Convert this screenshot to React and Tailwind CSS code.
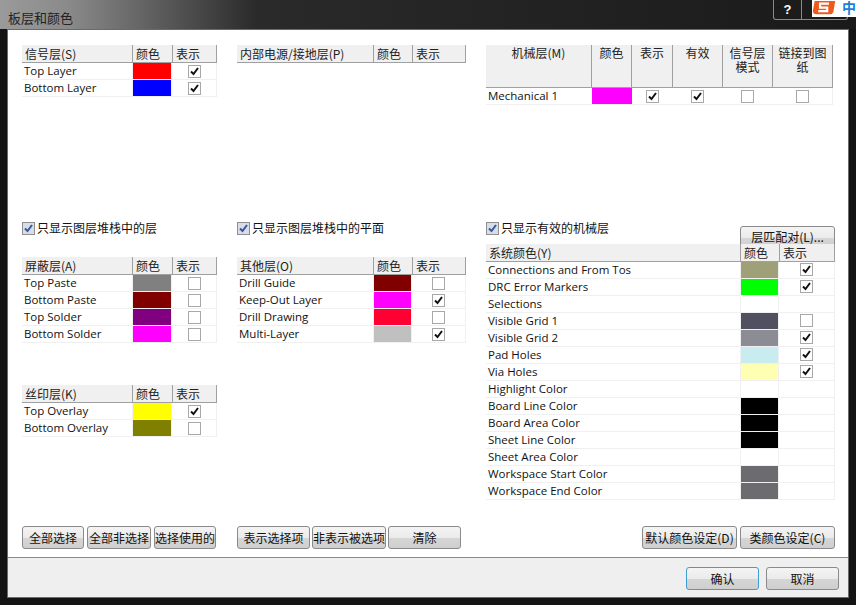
import React from 'react'

const cjk = "font-['Noto_Sans_CJK_SC','Noto_Sans',sans-serif]"

function Check({ on }) {
  return (
    <span className="w-[13px] h-[13px] border border-[#a8a8a8] bg-white flex items-center justify-center">
      {on && (
        <svg width="9" height="9" viewBox="0 0 9 9">
          <path d="M1 4.5 L3.5 7 L8 1" fill="none" stroke="#111" strokeWidth="2" />
        </svg>
      )}
    </span>
  )
}

function LayerTable({ title, rows, nameW = 'w-[111px]', colorW = 'w-[40px]', showW = 'w-[44px]' }) {
  return (
    <div className="text-[12px] leading-none">
      <div className="flex h-[17px] bg-[#f0f0f0] border-b border-[#a0a0a0] box-content text-[#222]">
        <div className={`${nameW} pl-[3px] border-r border-[#a0a0a0] leading-[17px] whitespace-nowrap overflow-hidden ${cjk}`}>{title}</div>
        <div className={`${colorW} pl-[3px] border-r border-[#a0a0a0] leading-[17px] ${cjk}`}>颜色</div>
        <div className={`${showW} pl-[3px] border-r border-[#a0a0a0] leading-[17px] ${cjk}`}>表示</div>
      </div>
      {rows.map(r => (
        <div key={r[0]} className="flex h-[17px] border-b border-[#f0f0f0] border-r">
          <div className={`${nameW} pl-[2px] leading-[16px] text-[11.5px] text-[#111] font-['Open_Sans',sans-serif] whitespace-nowrap`}>{r[0]}</div>
          <div className={`${colorW} border-l border-r border-[#f0f0f0] h-[16px]`} style={{ background: r[1] }} />
          <div className={`${showW} flex items-center justify-center h-[16px]`}>
            {r[2] !== undefined && <Check on={r[2]} />}
          </div>
        </div>
      ))}
    </div>
  )
}

function Toggle({ label }) {
  return (
    <div className={`flex items-center gap-[2px] h-[16px] text-[12px] text-[#111] ${cjk}`}>
      <span className="w-[13px] h-[13px] border border-[#8e8f8f] bg-[#d8dde8] flex items-center justify-center">
        <svg width="9" height="9" viewBox="0 0 9 9">
          <path d="M1 4.5 L3.5 7 L8 1" fill="none" stroke="#3a55a0" strokeWidth="2" />
        </svg>
      </span>
      {label}
    </div>
  )
}

function Btn({ children, w, active }) {
  return (
    <button className={`${w} h-[23px] rounded-[3px] border ${active ? 'border-[#3c9fd0]' : 'border-[#8a8a8a]'} bg-[linear-gradient(#f4f4f4_0%,#ebebeb_50%,#d6d6d6_51%,#cfcfcf_100%)] text-[12px] leading-none text-[#111] whitespace-nowrap ${cjk}`}>
      {children}
    </button>
  )
}

const signal = [['Top Layer', '#ff0000', true], ['Bottom Layer', '#0000ff', true]]
const mask = [['Top Paste', '#808080', false], ['Bottom Paste', '#800000', false], ['Top Solder', '#800080', false], ['Bottom Solder', '#ff00ff', false]]
const silk = [['Top Overlay', '#ffff00', true], ['Bottom Overlay', '#808000', false]]
const other = [['Drill Guide', '#800000', false], ['Keep-Out Layer', '#ff00ff', true], ['Drill Drawing', '#ff0033', false], ['Multi-Layer', '#c0c0c0', true]]
const system = [
  ['Connections and From Tos', '#a0a078', true],
  ['DRC Error Markers', '#00ff00', true],
  ['Selections', '#ffffff'],
  ['Visible Grid 1', '#505060', false],
  ['Visible Grid 2', '#8c8c94', true],
  ['Pad Holes', '#c8ecf0', true],
  ['Via Holes', '#ffffb4', true],
  ['Highlight Color', '#ffffff'],
  ['Board Line Color', '#000000'],
  ['Board Area Color', '#000000'],
  ['Sheet Line Color', '#000000'],
  ['Sheet Area Color', '#ffffff'],
  ['Workspace Start Color', '#6c6c70'],
  ['Workspace End Color', '#6c6c70'],
]

const mechHead = [
  ['w-[40px]', '颜色'],
  ['w-[41px]', '表示'],
  ['w-[50px]', '有效'],
  ['w-[50px]', '信号层模式'],
  ['w-[60px]', '链接到图纸'],
]

function MechTable() {
  return (
    <div className={`w-[347px] text-[12px] leading-[14px] text-[#222] ${cjk}`}>
      <div className="flex h-[42px] bg-[#f0f0f0] border-b border-[#a0a0a0] box-content">
        <div className="w-[106px] border-r border-[#a0a0a0] text-center pt-[1px]">机械层(M)</div>
        {mechHead.map(h => (
          <div key={h[1]} className={`${h[0]} border-r border-[#a0a0a0] text-center px-[3px] pt-[1px]`}>{h[1]}</div>
        ))}
      </div>
      <div className="flex h-[17px] border-b border-r border-[#f0f0f0]">
        <div className="w-[106px] pl-[2px] leading-[16px] text-[11.5px] text-[#111] font-['Open_Sans',sans-serif]">Mechanical 1</div>
        <div className="w-[40px] h-[16px] bg-[#ff00ff]" />
        <div className="w-[41px] h-[16px] flex items-center justify-center"><Check on /></div>
        <div className="w-[50px] h-[16px] flex items-center justify-center"><Check on /></div>
        <div className="w-[50px] h-[16px] flex items-center justify-center"><Check /></div>
        <div className="w-[60px] h-[16px] flex items-center justify-center"><Check /></div>
      </div>
    </div>
  )
}

export default function App() {
  return (
    <div className="relative w-[856px] h-[605px] overflow-hidden bg-[#141414] p-[7px] pt-0">
      {/* caption */}
      <div className="h-[29px] -mx-[7px] px-[8px] pt-[5px] bg-[linear-gradient(90deg,#9a9a9a_0%,#8a8a8a_8%,#2a2a2a_30%,#1a1a1a_100%)]">
        <span className={`text-[13px] leading-[20px] text-[#222] ${cjk}`}>板层和颜色</span>
      </div>

      {/* help + close + ime badge */}
      <div className="absolute right-[8px] top-0 flex h-[20px]">
        <div className="w-[29px] rounded-bl-[3px] border border-t-0 border-[#8a8a8a] text-white font-bold text-[13px] text-center font-['Liberation_Sans',sans-serif]">?</div>
        <div className="w-[46px] rounded-br-[3px] border border-t-0 border-l-0 border-[#8a8a8a]" />
      </div>
      <div className="absolute right-0 top-0 w-[44px] h-[17px] bg-white flex items-start">
        <svg width="28" height="17" viewBox="0 0 28 17">
          <path d="M3 0 H26 L24 12 Q23 15 20 15 H5 Q1 15 1 11 Z" fill="#ee5a1e" />
          <path d="M19 3 H9 V7.5 H17 V11.5 H7" fill="none" stroke="#fff" strokeWidth="2.5" />
        </svg>
        <span className={`ml-[5px] -mt-[3px] text-[14px] text-[#1a7fd8] font-bold ${cjk}`}>中</span>
      </div>

      {/* client */}
      <div className="h-[569px] border border-[#6a6a6a] bg-[#efefef]">
        <div className="h-[528px] bg-white border-b border-[#8a8a8a] pl-[14px] pr-[14px] pt-[15px] flex gap-[20px]">
          <div className="w-[195px] flex flex-col">
            <div className="h-[175px]"><LayerTable title="信号层(S)" rows={signal} /></div>
            <Toggle label="只显示图层堆栈中的层" />
            <div className="mt-[21px] h-[128px]"><LayerTable title="屏蔽层(A)" rows={mask} /></div>
            <LayerTable title="丝印层(K)" rows={silk} />
            <div className="mt-auto mb-[8px] flex gap-[3px]">
              <Btn w="w-[62px]">全部选择</Btn>
              <Btn w="w-[64px]">全部非选择</Btn>
              <Btn w="w-[62px]">选择使用的</Btn>
            </div>
          </div>

          <div className="w-[229px] flex flex-col">
            <div className="h-[175px]"><LayerTable title="内部电源/接地层(P)" rows={[]} nameW="w-[137px]" colorW="w-[39px]" showW="w-[53px]" /></div>
            <Toggle label="只显示图层堆栈中的平面" />
            <div className="mt-[21px]"><LayerTable title="其他层(O)" rows={other} nameW="w-[137px]" colorW="w-[39px]" showW="w-[53px]" /></div>
            <div className="mt-auto mb-[8px] flex gap-[2px]">
              <Btn w="w-[73px]">表示选择项</Btn>
              <Btn w="w-[74px]">非表示被选项</Btn>
              <Btn w="w-[73px]">清除</Btn>
            </div>
          </div>

          <div className="w-[349px] flex flex-col">
            <div className="h-[175px]"><MechTable /></div>
            <div className="flex items-start justify-between">
              <Toggle label="只显示有效的机械层" />
              <div className="mt-[4px]"><Btn w="w-[95px]">层匹配对(L)...</Btn></div>
            </div>
            <div className="mt-[-5px]"><LayerTable title="系统颜色(Y)" rows={system} nameW="w-[255px]" colorW="w-[39px]" showW="w-[55px]" /></div>
            <div className="mt-auto mb-[8px] flex justify-end gap-[3px]">
              <Btn w="w-[95px]">默认颜色设定(D)</Btn>
              <Btn w="w-[95px]">类颜色设定(C)</Btn>
            </div>
          </div>
        </div>
        <div className="flex justify-end gap-[7px] pt-[9px] pr-[9px]">
          <Btn w="w-[73px]" active>确认</Btn>
          <Btn w="w-[73px]">取消</Btn>
        </div>
      </div>
    </div>
  )
}
